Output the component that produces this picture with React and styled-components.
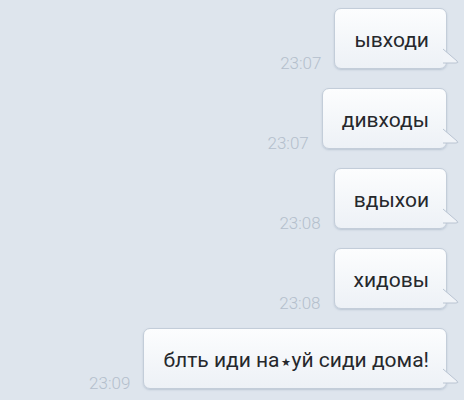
import React from "react";
import styled, { createGlobalStyle } from "styled-components";

const messages = [
  { text: ["ывходи"], time: "23:07" },
  { text: ["дивходы"], time: "23:07" },
  { text: ["вдыхои"], time: "23:08" },
  { text: ["хидовы"], time: "23:08" },
  { text: ["блть иди на", "уй сиди дома!"], time: "23:09" },
];

const App = () => {
  return (
    <>
      <GlobalStyle />
      <Chat>
        {messages.map((m, i) => (
          <Row key={i}>
            <Time>{m.time}</Time>
            <Bubble>
              {m.text[0]}
              {m.text.length > 1 && <Star>{"\u2605"}</Star>}
              {m.text[1]}
              <Tail width="18" height="16" viewBox="0 0 18 16">
                <path d="M0 0 L14 12 Q16 14 13 14 L0 14 Z" fill="#f1f4f8" />
                <path d="M0 0 L14 12 Q16 14 13 14 L0 14" fill="none" stroke="#b9c4d2" strokeWidth="1" />
              </Tail>
            </Bubble>
          </Row>
        ))}
      </Chat>
    </>
  );
};

const GlobalStyle = createGlobalStyle`
  body {
    margin: 0;
    background: #dee5ed;
    font-family: Roboto, "Noto Sans", sans-serif;
  }
`;

const Chat = styled.div`
  width: 464px;
  height: 400px;
  box-sizing: border-box;
  padding: 8px 17px 0 0;
  display: flex;
  flex-direction: column;
  gap: 19px;
  background: #dee5ed;
  overflow: hidden;
`;

const Row = styled.div`
  display: flex;
  justify-content: flex-end;
  align-items: flex-end;
  gap: 13px;
`;

const Time = styled.span`
  font-size: 17px;
  font-weight: 300;
  color: #b4bfcc;
  line-height: 1;
  margin-bottom: -3px;
`;

const Bubble = styled.div`
  position: relative;
  box-sizing: border-box;
  height: 61px;
  padding: 3px 17px 0 19px;
  display: flex;
  align-items: center;
  white-space: pre;
  font-size: 21px;
  color: #26282c;
  background: linear-gradient(#fcfdfe, #edf1f6);
  border: 1px solid #c3cdd9;
  border-radius: 7px;
  box-shadow: 0 1px 2px rgba(120, 140, 165, 0.35);
`;

const Star = styled.span`
  font-size: 11px;
  margin: 4px 1px 0;
`;

const Tail = styled.svg`
  position: absolute;
  right: -15px;
  bottom: 3px;
  overflow: visible;
`;

export default App;
